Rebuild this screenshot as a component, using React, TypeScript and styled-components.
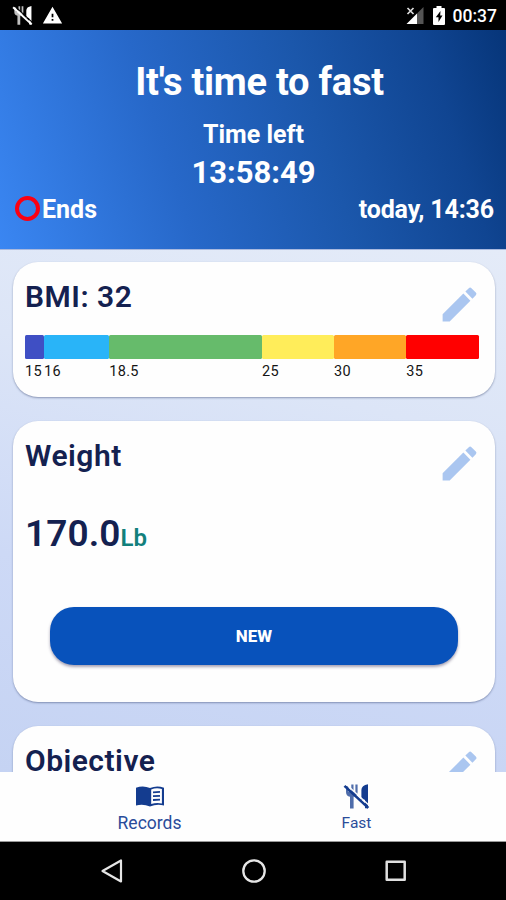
import React from "react";
import styled, { createGlobalStyle } from "styled-components";
import { MdEdit, MdWarning } from "react-icons/md";

const GlobalStyle = createGlobalStyle`
  * { box-sizing: border-box; }
  body { margin: 0; background: #000; font-family: Roboto, "Liberation Sans", sans-serif; }
`;

const Screen = styled.div`
  width: 506px;
  height: 900px;
  display: flex;
  flex-direction: column;
  overflow: hidden;
`;

const StatusBar = styled.div`
  height: 30px;
  flex: none;
  background: #000;
  color: #fff;
  display: flex;
  align-items: center;
  padding: 1px 9px 0 12px;
`;

const StatusIcon = styled.span<{ $gap: number }>`
  display: flex;
  margin-right: ${(p) => p.$gap}px;
`;

const Spacer = styled.div`
  flex: 1;
`;

const Clock = styled.span`
  font-size: 17.5px;
  font-weight: 500;
  line-height: 30px;
`;

const Header = styled.header`
  height: 219px;
  flex: none;
  padding: 31px 12px 0 15px;
  color: #fff;
  font-weight: 700;
  background: linear-gradient(72deg, #3a86f2 0%, #2768c9 34%, #1b57ab 62%, #104592 85%, #063579 100%);
  display: flex;
  flex-direction: column;
`;

const Title = styled.h1`
  margin: 0 0 16px 10px;
  text-align: center;
  font-size: 38px;
  line-height: 43px;
  font-weight: 700;
  letter-spacing: -0.25px;
`;

const TimeLabel = styled.div`
  text-align: center;
  font-size: 25px;
  line-height: 30px;
  margin: 0 2px 5px 0;
`;

const Timer = styled.div`
  text-align: center;
  font-size: 31px;
  line-height: 36px;
  margin: 0 2px 4px 0;
`;

const EndsRow = styled.div`
  display: flex;
  align-items: center;
  justify-content: space-between;
  font-size: 25px;
  line-height: 30px;
`;

const EndsLabel = styled.span`
  display: flex;
  align-items: center;
  gap: 2px;
`;

const EndsTime = styled.span`
  letter-spacing: -0.15px;
`;

const Ring = styled.span`
  width: 25px;
  height: 25px;
  border: 4.5px solid #fb0012;
  border-radius: 50%;
  margin-top: -3px;
`;

const Content = styled.main`
  flex: 1;
  min-height: 0;
  overflow: hidden;
  padding: 12px 11px 0 13px;
  background: linear-gradient(192deg, #e4ebf8 0%, #dce5f7 30%, #cdd9f6 65%, #c5d3f3 100%);
  border-top: 1px solid #a9b9df;
  display: flex;
  flex-direction: column;
  gap: 24px;
`;

const Card = styled.section<{ $height: number }>`
  height: ${(p) => p.$height}px;
  flex: none;
  background: #fefefe;
  border-radius: 25px;
  padding: 16px 15px 0 12px;
  box-shadow: 0 1px 2px rgba(40, 55, 100, 0.45);
`;

const CardHead = styled.div`
  display: flex;
  justify-content: space-between;
  height: 57px;
`;

const CardTitle = styled.h2`
  margin: 0;
  padding-top: 1px;
  font-size: 30px;
  line-height: 36px;
  font-weight: 600;
  letter-spacing: 0.5px;
  color: #142150;
`;

const EditButton = styled.button`
  width: 45px;
  height: 45px;
  margin: 4px -2px 0 0;
  padding: 0;
  border: 0;
  background: none;
  color: #aac6f0;
  display: flex;
`;

const Scale = styled.div`
  display: flex;
`;

const Range = styled.div<{ $width: number; $color: string }>`
  width: ${(p) => p.$width}px;
  font-size: 14.5px;
  line-height: 25px;
  letter-spacing: 0.3px;
  color: #151515;
  &::before {
    content: "";
    display: block;
    height: 24px;
    border-radius: 1.5px;
    background: ${(p) => p.$color};
  }
`;

const WeightValue = styled.div`
  display: flex;
  align-items: baseline;
  margin-top: 18px;
  font-size: 37px;
  line-height: 44px;
  font-weight: 600;
  letter-spacing: 0.1px;
  color: #142150;
`;

const Unit = styled.span`
  font-size: 24px;
  letter-spacing: 0;
  color: #12807c;
`;

const NewButton = styled.button`
  display: block;
  width: 408px;
  height: 58px;
  margin: 47px 0 0 25px;
  padding: 0;
  border: 0;
  border-radius: 24px;
  background: #0852bb;
  box-shadow: 0 2px 3px rgba(60, 50, 90, 0.45);
  color: #fff;
  font: 800 17px Roboto, sans-serif;
`;

const TabBar = styled.nav`
  height: 70px;
  flex: none;
  background: #fefefe;
  border-bottom: 1px solid #999;
  display: flex;
  justify-content: center;
`;

const Tab = styled.div<{ $size: number; $spacing: number }>`
  width: 207px;
  padding-top: 10px;
  display: flex;
  flex-direction: column;
  align-items: center;
  color: #2a4c9a;
  font-size: ${(p) => p.$size}px;
  letter-spacing: ${(p) => p.$spacing}px;
  line-height: 24px;
`;

const TabIcon = styled.span`
  height: 29px;
  display: flex;
  align-items: center;
  color: #143c8f;
`;

const SystemBar = styled.div`
  height: 58px;
  flex: none;
  background: #000;
  display: flex;
  justify-content: center;
  padding-left: 2px;
`;

const SystemKey = styled.div`
  width: 142px;
  display: flex;
  align-items: center;
  justify-content: center;
`;

const NoMeals = ({ size, slash }: { size: number; slash: string }) => (
  <svg width={size} height={size} viewBox="0 0 27 27" fill="currentColor">
    <path
      d="M3 3v6q0 4 4 4.7v11.8h3.6V13.7q4-.7 4-4.7V1.5h-2.2V9h-1.9V1.5H8.3V9H5.6V3z"
      opacity="0.75"
    />
    <path d="M25 1.2v24h-3v-8.5h-3.6V7q0-4.6 6.6-5.8z" />
    <path d="M.6 3.8 2.4 2 26.2 24 24.4 25.8z" />
    <path d="M3 .9 26.8 23" fill="none" stroke={slash} strokeWidth="1.3" />
  </svg>
);

const Book = () => (
  <svg width="28" height="21" viewBox="0 0 28 21" fill="none">
    <path d="M0 1.8Q7-1 14 2 21-1 28 1.8V19.6q-7-2.2-14 1Q7 17.4 0 19.6z" fill="#143c8f" />
    <path d="M15.2 3.4q5-1.9 10.7-.5v14.5q-5.7-1.2-10.7.7z" fill="#fefefe" />
    <path d="M17 6.4l7-.5M17 10.2l7-.4M17 14l7-.4" stroke="#143c8f" strokeWidth="1.8" />
  </svg>
);

const Signal = () => (
  <svg width="18" height="19" viewBox="0 0 18 19">
    <path d="M17.5 1v17H11V7.5z" fill="#555" />
    <path d="M11 7.5V18H.5z" fill="#fff" />
    <path d="m1.5 2 6 6m0-6-6 6" stroke="#ddd" strokeWidth="1.7" />
  </svg>
);

const Battery = () => (
  <svg width="12" height="19" viewBox="0 0 12 19">
    <path d="M3.5 0h5v2H11q1 0 1 1v15q0 1-1 1H1q-1 0-1-1V3q0-1 1-1h2.5z" fill="#fff" />
    <path d="M7.5 5 2.8 11.3h2.7V16l4-6.5H7.2z" fill="#000" />
  </svg>
);

const ranges = [
  { label: "15", width: 19, color: "#3f4fc4" },
  { label: "16", width: 65.3, color: "#29b4f8" },
  { label: "18.5", width: 152.7, color: "#66bb6b" },
  { label: "25", width: 72, color: "#ffed5a" },
  { label: "30", width: 72.3, color: "#ffa626" },
  { label: "35", width: 72.7, color: "#ff0000" },
];

const CardHeader = ({ title }: { title: string }) => (
  <CardHead>
    <CardTitle>{title}</CardTitle>
    <EditButton aria-label="Edit">
      <MdEdit size={45} />
    </EditButton>
  </CardHead>
);

export default function App() {
  return (
    <Screen>
      <GlobalStyle />
      <StatusBar>
        <StatusIcon $gap={9}><NoMeals size={21} slash="#000" /></StatusIcon>
        <StatusIcon $gap={0}><MdWarning size={21} /></StatusIcon>
        <Spacer />
        <StatusIcon $gap={9}><Signal /></StatusIcon>
        <StatusIcon $gap={8}><Battery /></StatusIcon>
        <Clock>00:37</Clock>
      </StatusBar>
      <Header>
        <Title>It's time to fast</Title>
        <TimeLabel>Time left</TimeLabel>
        <Timer>13:58:49</Timer>
        <EndsRow>
          <EndsLabel><Ring />Ends</EndsLabel>
          <EndsTime>today, 14:36</EndsTime>
        </EndsRow>
      </Header>
      <Content>
        <Card $height={135}>
          <CardHeader title="BMI: 32" />
          <Scale>
            {ranges.map((r) => (
              <Range key={r.label} $width={r.width} $color={r.color}>{r.label}</Range>
            ))}
          </Scale>
        </Card>
        <Card $height={281}>
          <CardHeader title="Weight" />
          <WeightValue>170.0<Unit>Lb</Unit></WeightValue>
          <NewButton>NEW</NewButton>
        </Card>
        <Card $height={281}>
          <CardHeader title="Objective" />
        </Card>
      </Content>
      <TabBar>
        <Tab $size={17.5} $spacing={0}>
          <TabIcon><Book /></TabIcon>
          Records
        </Tab>
        <Tab $size={15.5} $spacing={0}>
          <TabIcon><NoMeals size={27} slash="#fefefe" /></TabIcon>
          Fast
        </Tab>
      </TabBar>
      <SystemBar>
        <SystemKey>
          <svg width="24" height="26" viewBox="0 0 24 26" fill="none" stroke="#e6e6e6" strokeWidth="2.2" strokeLinejoin="round">
            <path d="M21 2.5v21L2.5 13z" />
          </svg>
        </SystemKey>
        <SystemKey>
          <svg width="26" height="26" viewBox="0 0 26 26" fill="none" stroke="#e6e6e6" strokeWidth="2.3">
            <circle cx="13" cy="13" r="10.7" />
          </svg>
        </SystemKey>
        <SystemKey>
          <svg width="22" height="22" viewBox="0 0 22 22" fill="none" stroke="#e0e0e0" strokeWidth="2.5" strokeLinejoin="round">
            <rect x="1.7" y="1.7" width="18" height="18" />
          </svg>
        </SystemKey>
      </SystemBar>
    </Screen>
  );
}
